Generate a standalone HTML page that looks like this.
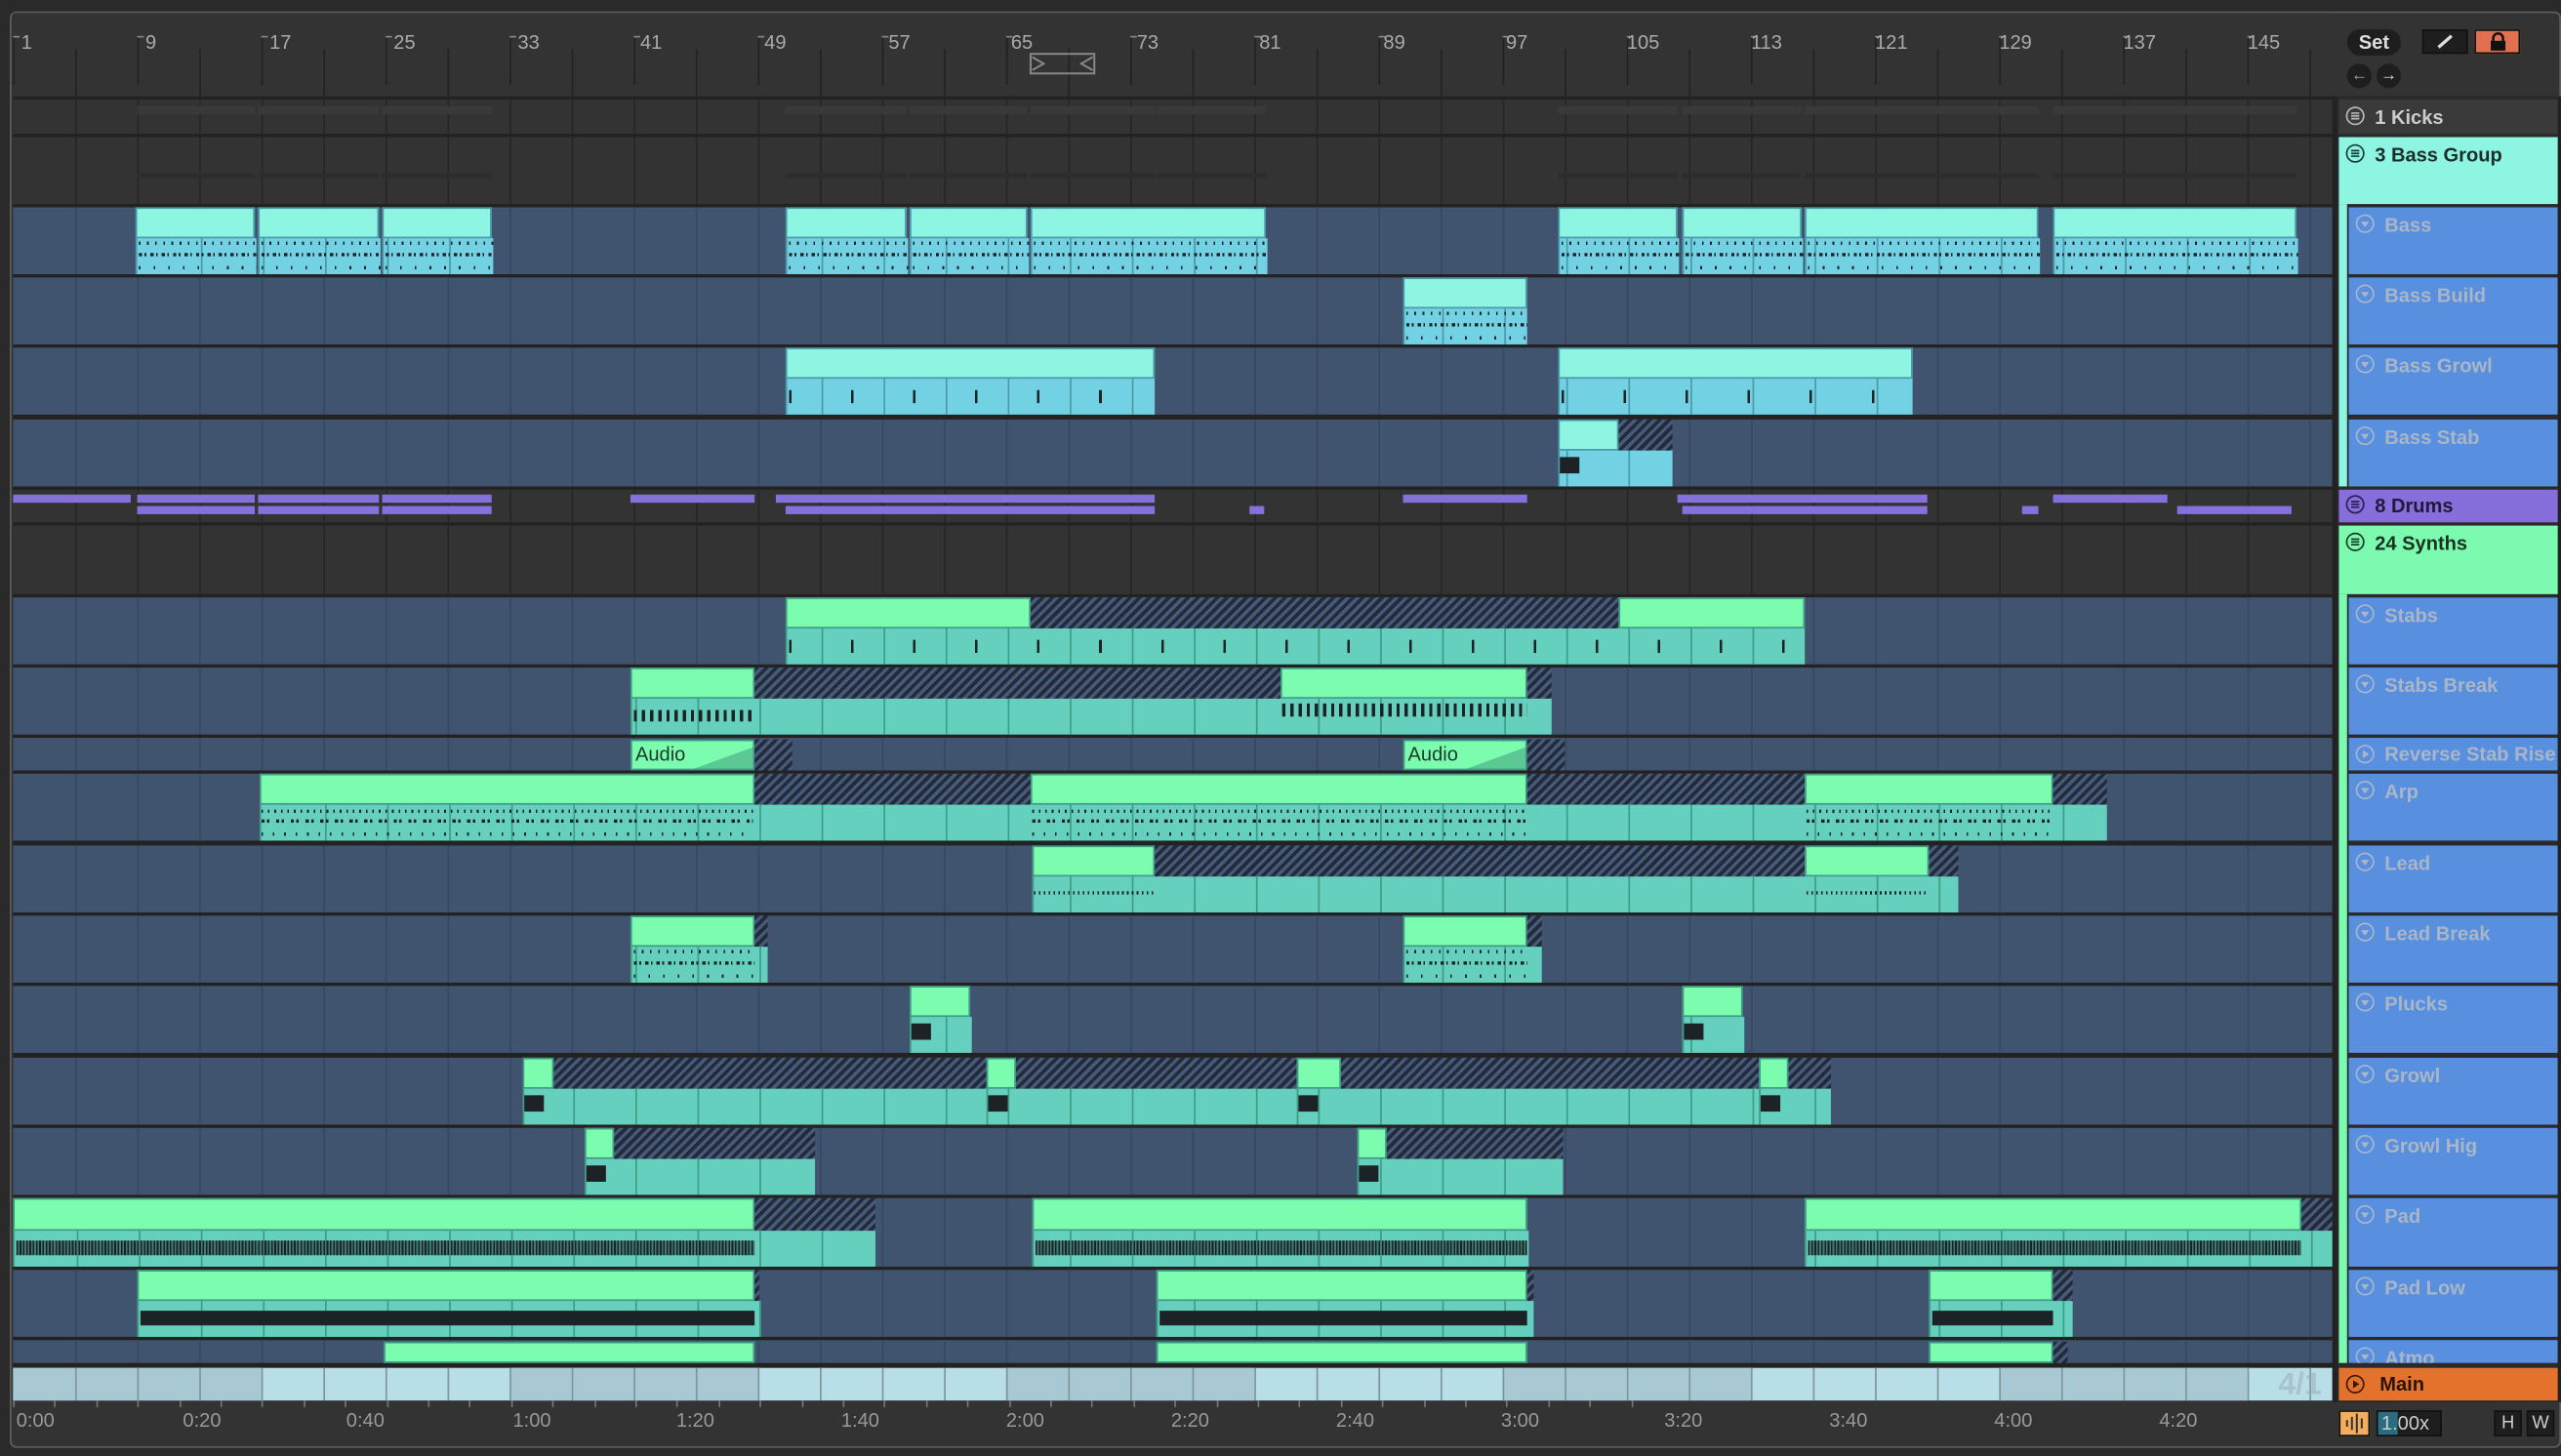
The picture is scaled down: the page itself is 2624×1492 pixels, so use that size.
<!DOCTYPE html>
<html><head><meta charset="utf-8">
<style>
html,body{margin:0;padding:0;background:#2a2a2a;overflow:hidden;width:2624px;height:1492px}
#s{position:absolute;left:0;top:0;width:1568px;height:892px;transform:scale(1.67347,1.67265);transform-origin:0 0;background:#2a2a2a;font-family:"Liberation Sans",sans-serif}
.a{position:absolute;box-sizing:border-box}
.hatch{background:repeating-linear-gradient(135deg,#232a38 0 2.2px,#465b7c 2.2px 4.2px)}
.lbl{font-weight:bold;font-size:12px;position:absolute;left:22px;top:4px;white-space:nowrap}
.ic{position:absolute;left:4px;top:4px;width:12px;height:12px}
.ic svg{position:absolute;left:0;top:0}
.rn{position:absolute;top:19px;font-size:12px;color:#aaa}
.tm{position:absolute;top:863px;font-size:12px;color:#999}
</style></head><body><div id="s">
<div class="a" style="left:6px;top:7px;width:1562px;height:880px;background:#333;border:1.5px solid #5e5e5e;border-radius:4px"></div>
<div id="grid"></div>
<div id="clips"></div>
<div class="rn" style="left:13px">1</div><div class="rn" style="left:89px">9</div><div class="rn" style="left:165px">17</div><div class="rn" style="left:241px">25</div><div class="rn" style="left:317px">33</div><div class="rn" style="left:392px">41</div><div class="rn" style="left:468px">49</div><div class="rn" style="left:544px">57</div><div class="rn" style="left:619px">65</div><div class="rn" style="left:696px">73</div><div class="rn" style="left:771px">81</div><div class="rn" style="left:847px">89</div><div class="rn" style="left:922px">97</div><div class="rn" style="left:996px">105</div><div class="rn" style="left:1072px">113</div><div class="rn" style="left:1148px">121</div><div class="rn" style="left:1224px">129</div><div class="rn" style="left:1300px">137</div><div class="rn" style="left:1376px">145</div>
<svg class="a" style="left:630px;top:32px" width="42" height="14"><rect x="1" y="1" width="39" height="12" fill="none" stroke="#888" stroke-width="1.2"/><path d="M2 3 L9 7 L2 11 M39 3 L32 7 L39 11" fill="none" stroke="#888" stroke-width="1.2"/></svg>
<div class="a" style="left:1437px;top:18px;width:33px;height:16px;background:#1e1e1e;border-radius:8px;color:#ddd;font-size:12px;font-weight:bold;text-align:center;line-height:16px">Set</div>
<div class="a" style="left:1483px;top:18px;width:28px;height:15px;background:#1e1e1e;border:1px solid #111"><svg width="26" height="13"><path d="M9 10 L17 3" stroke="#ddd" stroke-width="2"/></svg></div>
<div class="a" style="left:1515px;top:18px;width:28px;height:15px;background:#e07050;border:1px solid #111"><svg width="26" height="13"><rect x="9" y="6" width="9" height="6" fill="#111"/><path d="M10.5 7 V4.5 a3 3 0 0 1 6 0 V7" fill="none" stroke="#111" stroke-width="1.5"/></svg></div>
<div class="a" style="left:1437px;top:39px;width:15px;height:15px;background:#1e1e1e;border-radius:50%;color:#aaa;font-size:10px;text-align:center;line-height:15px">&#8592;</div>
<div class="a" style="left:1455px;top:39px;width:15px;height:15px;background:#1e1e1e;border-radius:50%;color:#ddd;font-size:10px;text-align:center;line-height:15px">&#8594;</div>
<div id="hdrs"></div>
<div class="a" style="left:1432px;top:61px;width:134px;height:21px;background:#3a3a3a"><div class="ic g" style="color:#bbb"></div><div class="lbl" style="color:#ccc">1 Kicks</div></div>
<div class="a" style="left:1432px;top:84px;width:134px;height:41px;background:#8ef5e3"><div class="ic g" style="color:#1c3a35"></div><div class="lbl" style="color:#1c2e2a">3 Bass Group</div></div>
<div class="a" style="left:1432px;top:300px;width:134px;height:20px;background:#876fdb"><div class="ic g" style="color:#2a1d50;top:3px"></div><div class="lbl" style="color:#22183e;top:3px">8 Drums</div></div>
<div class="a" style="left:1432px;top:322px;width:134px;height:42px;background:#7cfbb0"><div class="ic g" style="color:#173a25"></div><div class="lbl" style="color:#173220">24 Synths</div></div>
<div class="a" style="left:1432px;top:838px;width:134px;height:20px;background:#e5722c"><div class="ic p" style="color:#3a1a05;top:4px"></div><div class="lbl" style="color:#2a1405;left:25px;top:3px">Main</div></div>
<div class="a" style="left:1438px;top:127px;width:128px;height:171px;overflow:hidden">
 <div class="a" style="top:0;width:128px;height:41px;background:#598fdf"><div class="ic" style="color:#a9b6c8"></div><div class="lbl" style="color:#a9b6c8">Bass</div></div>
 <div class="a" style="top:43px;width:128px;height:41px;background:#598fdf"><div class="ic" style="color:#a9b6c8"></div><div class="lbl" style="color:#a9b6c8">Bass Build</div></div>
 <div class="a" style="top:86px;width:128px;height:41px;background:#598fdf"><div class="ic" style="color:#a9b6c8"></div><div class="lbl" style="color:#a9b6c8">Bass Growl</div></div>
 <div class="a" style="top:130px;width:128px;height:41px;background:#598fdf"><div class="ic" style="color:#a9b6c8"></div><div class="lbl" style="color:#a9b6c8">Bass Stab</div></div>
</div>
<div class="a" style="left:1438px;top:366px;width:128px;height:469px;overflow:hidden">
 <div class="a" style="top:0;width:128px;height:41px;background:#598fdf"><div class="ic" style="color:#a9b6c8"></div><div class="lbl" style="color:#a9b6c8">Stabs</div></div>
 <div class="a" style="top:43px;width:128px;height:41px;background:#598fdf"><div class="ic" style="color:#a9b6c8"></div><div class="lbl" style="color:#a9b6c8">Stabs Break</div></div>
 <div class="a" style="top:86px;width:128px;height:20px;background:#598fdf"><div class="ic p" style="color:#a9b6c8;top:4px"></div><div class="lbl" style="color:#a9b6c8;top:3px">Reverse Stab Rise</div></div>
 <div class="a" style="top:108px;width:128px;height:41px;background:#598fdf"><div class="ic" style="color:#a9b6c8"></div><div class="lbl" style="color:#a9b6c8">Arp</div></div>
 <div class="a" style="top:152px;width:128px;height:41px;background:#598fdf"><div class="ic" style="color:#a9b6c8"></div><div class="lbl" style="color:#a9b6c8">Lead</div></div>
 <div class="a" style="top:195px;width:128px;height:41px;background:#598fdf"><div class="ic" style="color:#a9b6c8"></div><div class="lbl" style="color:#a9b6c8">Lead Break</div></div>
 <div class="a" style="top:238px;width:128px;height:41px;background:#598fdf"><div class="ic" style="color:#a9b6c8"></div><div class="lbl" style="color:#a9b6c8">Plucks</div></div>
 <div class="a" style="top:282px;width:128px;height:41px;background:#598fdf"><div class="ic" style="color:#a9b6c8"></div><div class="lbl" style="color:#a9b6c8">Growl</div></div>
 <div class="a" style="top:325px;width:128px;height:41px;background:#598fdf"><div class="ic" style="color:#a9b6c8"></div><div class="lbl" style="color:#a9b6c8">Growl Hig</div></div>
 <div class="a" style="top:368px;width:128px;height:42px;background:#598fdf"><div class="ic" style="color:#a9b6c8"></div><div class="lbl" style="color:#a9b6c8">Pad</div></div>
 <div class="a" style="top:412px;width:128px;height:41px;background:#598fdf"><div class="ic" style="color:#a9b6c8"></div><div class="lbl" style="color:#a9b6c8">Pad Low</div></div>
 <div class="a" style="top:455px;width:128px;height:41px;background:#598fdf"><div class="ic" style="color:#a9b6c8"></div><div class="lbl" style="color:#a9b6c8">Atmo</div></div>
</div>
<div class="a" style="left:1432px;top:125px;width:5px;height:173px;background:#8ef5e3"></div>
<div class="a" style="left:1432px;top:364px;width:5px;height:471px;background:#7cfbb0"></div>
<div class="a" style="left:389px;top:455px;font-size:12px;color:#1c3a2a;z-index:5">Audio</div>
<div class="a" style="left:862px;top:455px;font-size:12px;color:#1c3a2a;z-index:5">Audio</div>
<div class="a" style="left:1395px;top:838px;font-size:19px;font-weight:bold;color:rgba(150,170,175,0.5);z-index:5">4/1</div>
<div class="tm" style="left:10px">0:00</div><div class="tm" style="left:112px">0:20</div><div class="tm" style="left:212px">0:40</div><div class="tm" style="left:314px">1:00</div><div class="tm" style="left:414px">1:20</div><div class="tm" style="left:515px">1:40</div><div class="tm" style="left:616px">2:00</div><div class="tm" style="left:717px">2:20</div><div class="tm" style="left:818px">2:40</div><div class="tm" style="left:919px">3:00</div><div class="tm" style="left:1019px">3:20</div><div class="tm" style="left:1120px">3:40</div><div class="tm" style="left:1221px">4:00</div><div class="tm" style="left:1322px">4:20</div>
<div class="a" style="left:1432px;top:864px;width:19px;height:16px;background:#f4ad5e;border:1px solid #111"><svg width="17" height="14"><path d="M4 5v4M7 3v8M10 1v12M13 4v6" stroke="#333" stroke-width="1.2"/></svg></div>
<div class="a" style="left:1455px;top:864px;width:40px;height:16px;background:#1e1e1e;border:1px solid #111"><div class="a" style="left:0;top:0;width:12px;height:14px;background:#2a6d80"></div><div class="a" style="left:2px;top:0;font-size:12px;color:#ccc;line-height:14px">1.00x</div></div>
<div class="a" style="left:1527px;top:864px;width:17px;height:16px;background:#1e1e1e;border:1px solid #111;color:#ccc;font-size:11px;text-align:center;line-height:14px">H</div>
<div class="a" style="left:1547px;top:864px;width:17px;height:16px;background:#1e1e1e;border:1px solid #111;color:#ccc;font-size:11px;text-align:center;line-height:14px">W</div>
</div>
<script>
(function(){
var s=document.getElementById('grid'),c=document.getElementById('clips');
function d(p,x,y,w,h,st,cls){var e=document.createElement('div');e.className='a'+(cls?' '+cls:'');e.style.cssText='left:'+x+'px;top:'+y+'px;width:'+w+'px;height:'+h+'px;'+(st||'');p.appendChild(e);return e;}
function X(b){return 8+(b-1)*9.5;}
var L=8,R=1428;
d(s,L,8,R-L,52,'background:#333');
for(var b=1;b<=149;b+=4){var x=X(b);d(s,x,(b-1)%8==0?22:30,1,30,'background:#222');if((b-1)%8==0)d(s,x,22,4,1,'background:#888');}
var rows=[[61,21,'g'],[84,41,'g'],[127,41,'t'],[170,41,'t'],[213,41,'t'],[257,41,'t'],[300,20,'g'],[322,42,'g'],[366,41,'t'],[409,41,'t'],[452,20,'t'],[474,41,'t'],[518,41,'t'],[561,41,'t'],[604,41,'t'],[648,41,'t'],[691,41,'t'],[734,42,'t'],[778,41,'t'],[821,14,'t']];
d(s,L,59,R-L,779,'background:#222');
rows.forEach(function(r){var bg=r[2]=='g'?'#333':'#40536f';var lc=r[2]=='g'?'#262626':'#364862';
 d(s,L,r[0],R-L,r[1],'background:'+bg);
 for(var b=5;b<=149;b+=4)d(s,X(b),r[0],1,r[1],'background:'+lc);});
d(s,L,838,R-L,20,'background:#b8dee8');
for(var b=1;b<149;b+=32)d(s,X(b),838,Math.min(152,R-X(b)),20,'background:#a8c9d3');
for(var b=5;b<=149;b+=4)d(s,X(b),838,1,20,'background:#7f959c');
for(var i=0;i<40;i++)d(s,8+i*25.4,858,1,4,'background:#777');
[[84,156],[158,232],[234,301],[481,555],[557,629],[631,707],[708,775],[954,1027],[1030,1103],[1105,1248],[1257,1406]].forEach(function(q){d(s,q[0],106,q[1]-q[0],3,'background:#2d2d2d');d(s,q[0],65,q[1]-q[0],5,'background:#393939');});
[[8,80,303],[84,156,303],[158,232,303],[234,301,303],[386,462,303],[475,707,303],[859,935,303],[1027,1180,303],[1257,1327,303],[84,156,310],[158,232,310],[234,301,310],[481,707,310],[765,774,310],[1030,1180,310],[1238,1248,310],[1333,1403,310]].forEach(function(q){d(c,q[0],q[2],q[1]-q[0],4.5,'background:#8670dc');});
function clip(y,h,hd,bd,cs){
 var hh=Math.round(h*0.47);
 hd.forEach(function(q){var w=q[1]-q[0];
  if(q[2]=='h')d(c,q[0],y,w,hh,'','hatch');
  else d(c,q[0],y,w,hh,'background:'+cs[0]+';border:1px solid '+cs[2]);});
 bd.forEach(function(q){var w=q[1]-q[0];var e=d(c,q[0],y+hh,w,h-hh,'background:'+cs[1]+';border-left:1px solid '+cs[2]);
  for(var b=1;b<=149;b+=4){var xx=X(b)-q[0];if(xx>1&&xx<w)d(e,xx,0,1,h-hh,'background:'+cs[2]);}
  var ph=h-hh,pw=(q[3]||w)-0;
  if(q[2]=='mid'){d(e,1,ph*0.4,pw-2,2,'background:repeating-linear-gradient(90deg,#1c2226 0 2px,transparent 2px 3.5px,#1c2226 3.5px 4.5px,transparent 4.5px 7px)');
   d(e,1,ph*0.1,pw-2,2,'background:repeating-linear-gradient(90deg,#1c2226 0 1px,transparent 1px 5px)');d(e,1,ph*0.75,pw-2,2,'background:repeating-linear-gradient(90deg,#1c2226 0 1px,transparent 1px 9px)');}
  if(q[2]=='st')d(e,1,ph*0.3,pw-2,ph*0.35,'background:repeating-linear-gradient(90deg,#1c2226 0 2px,transparent 2px 5px)');
  if(q[2]=='sp')d(e,1,ph*0.3,pw-2,ph*0.4,'background:repeating-linear-gradient(90deg,#1c2226 0 1.5px,transparent 1.5px 38px)');
  if(q[2]=='dn')d(e,1,ph*0.25,pw-2,ph*0.45,'background:repeating-linear-gradient(90deg,#1c2226 0 1px,#3f7d72 1px 2px)');
  if(q[2]=='bar')d(e,1,ph*0.25,pw-2,ph*0.45,'background:#1c2226');
  if(q[2]=='blk')d(e,0,ph*0.2,12,ph*0.45,'background:#1c2226');
 });}
var B=['#8ef5e3','#72d1e3','#4a9aa8'],G=['#7cfcae','#64d0bd','#3f9c86'];
[[83,156],[158,232],[234,301],[481,555],[557,629],[631,775],[954,1027],[1030,1103],[1105,1248],[1257,1406]].forEach(function(q){clip(127,41,[[q[0],q[1],'c']],[[q[0],q[1]+1,'mid']],B);});
clip(170,41,[[859,935,'c']],[[859,935,'mid']],B);
clip(213,41,[[481,707,'c']],[[481,707,'sp']],B);
clip(213,41,[[954,1171,'c']],[[954,1171,'sp']],B);
clip(257,41,[[954,991,'c'],[991,1024,'h']],[[954,1024,'blk']],B);
clip(366,41,[[481,631,'c'],[631,991,'h'],[991,1105,'c']],[[481,1105,'sp']],G);
clip(409,41,[[386,462,'c'],[462,784,'h'],[784,935,'c'],[935,950,'h']],[[386,950,'st',76]],G);
d(c,785,431,150,8,'background:repeating-linear-gradient(90deg,#1c2226 0 2px,transparent 2px 5px)');
d(c,386,453,76,19,'background:linear-gradient(160deg,#7cfcae 70%,#5ec894 70%);border:1px solid #3f9c86');d(c,462,453,23,19,'','hatch');
d(c,859,453,76,19,'background:linear-gradient(160deg,#7cfcae 70%,#5ec894 70%);border:1px solid #3f9c86');d(c,935,453,23,19,'','hatch');
clip(474,41,[[159,462,'c'],[462,631,'h'],[631,935,'c'],[935,1105,'h'],[1105,1257,'c'],[1257,1290,'h']],[[159,1290,'']],G);
[[159,462],[631,935],[1105,1257]].forEach(function(q){d(c,q[0]+1,502,q[1]-q[0]-2,2,'background:repeating-linear-gradient(90deg,#1c2226 0 2px,transparent 2px 3.5px,#1c2226 3.5px 5px,transparent 5px 9px)');d(c,q[0]+1,496,q[1]-q[0]-2,2,'background:repeating-linear-gradient(90deg,#1c2226 0 1px,transparent 1px 4px)');d(c,q[0]+1,510,q[1]-q[0]-2,2,'background:repeating-linear-gradient(90deg,#1c2226 0 1px,transparent 1px 7px)');});
clip(518,41,[[632,707,'c'],[707,1105,'h'],[1105,1181,'c'],[1181,1199,'h']],[[632,1199,'']],G);
[[632,707],[1105,1181]].forEach(function(q){d(c,q[0]+1,546,q[1]-q[0]-2,2,'background:repeating-linear-gradient(90deg,#1c2226 0 1px,transparent 1px 3px)');});
clip(561,41,[[386,462,'c'],[462,470,'h']],[[386,470,'mid',76]],G);
clip(561,41,[[859,935,'c'],[935,944,'h']],[[859,944,'mid',76]],G);
clip(604,41,[[557,594,'c']],[[557,595,'blk']],G);
clip(604,41,[[1030,1067,'c']],[[1030,1068,'blk']],G);
clip(648,41,[[320,339,'c'],[339,604,'h'],[604,622,'c'],[622,794,'h'],[794,821,'c'],[821,1077,'h'],[1077,1095,'c'],[1095,1121,'h']],[[320,604,'blk'],[604,794,'blk'],[794,1077,'blk'],[1077,1121,'blk']],G);
clip(691,41,[[358,376,'c'],[376,499,'h']],[[358,499,'blk']],G);
clip(691,41,[[831,849,'c'],[849,957,'h']],[[831,957,'blk']],G);
clip(734,42,[[8,462,'c'],[462,536,'h']],[[8,536,'dn',454]],G);
clip(734,42,[[632,935,'c']],[[632,936,'dn',303]],G);
clip(734,42,[[1105,1409,'c'],[1409,1430,'h']],[[1105,1430,'dn',304]],G);
clip(778,41,[[84,462,'c'],[462,465,'h']],[[84,465,'bar',378]],G);
clip(778,41,[[708,935,'c'],[935,939,'h']],[[708,939,'bar',227]],G);
clip(778,41,[[1181,1257,'c'],[1257,1269,'h']],[[1181,1269,'bar',76]],G);
[[235,462],[708,935],[1181,1257]].forEach(function(q){d(c,q[0],822,q[1]-q[0],13,'background:#7cfcae;border:1px solid #3f9c86');});
d(c,1257,822,9,13,'','hatch');
var h=document.getElementById('hdrs');
d(h,1428,59,140,800,'background:#222');
d(h,1431,59,135,800,'background:#2a2a2a');
// icons
var ics=document.querySelectorAll('.ic');
for(var i=0;i<ics.length;i++){var e=ics[i],inner;
 if(e.classList.contains('g'))inner='<path d="M3.5 4.3h5M3.5 6h5M3.5 7.7h5" stroke="currentColor" stroke-width="1"/>';
 else if(e.classList.contains('p'))inner='<path d="M4.7 3.5L8.5 6L4.7 8.5Z" fill="currentColor"/>';
 else inner='<path d="M3.5 4.8H8.5L6 8.3Z" fill="currentColor"/>';
 e.innerHTML='<svg width="12" height="12" viewBox="0 0 12 12"><circle cx="6" cy="6" r="5.2" fill="none" stroke="currentColor" stroke-width="1"/>'+inner+'</svg>';}
})();
</script>
</body></html>
